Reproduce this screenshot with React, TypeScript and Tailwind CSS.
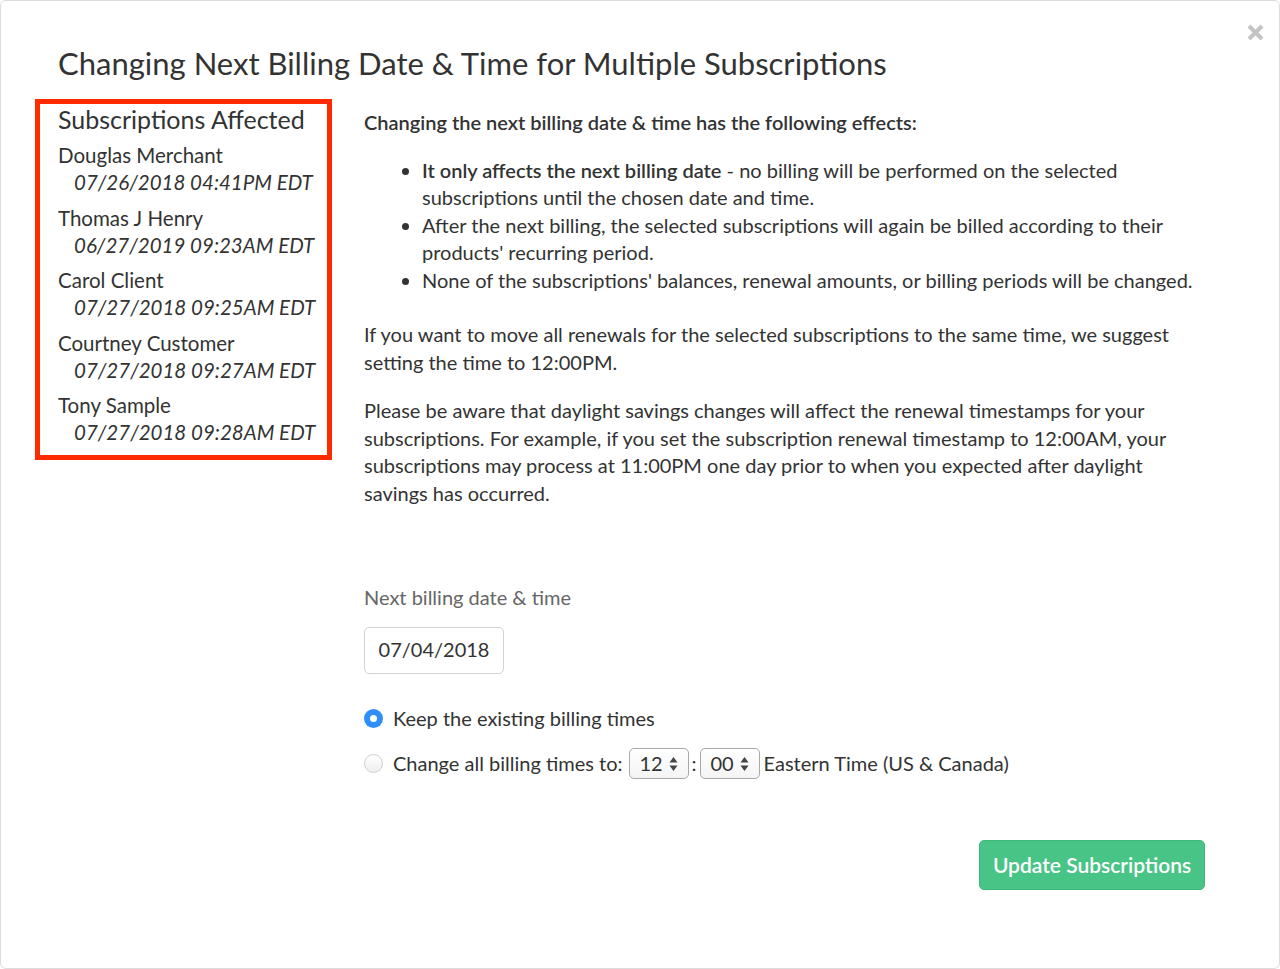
import React from "react";

const subs = [
  { name: "Douglas Merchant", date: "07/26/2018 04:41PM EDT" },
  { name: "Thomas J Henry", date: "06/27/2019 09:23AM EDT" },
  { name: "Carol Client", date: "07/27/2018 09:25AM EDT" },
  { name: "Courtney Customer", date: "07/27/2018 09:27AM EDT" },
  { name: "Tony Sample", date: "07/27/2018 09:28AM EDT" },
];

function Spinner() {
  return (
    <svg width="9" height="16" viewBox="0 0 9 16" className="ml-1.5">
      <path d="M4.5 1 L8.5 6.5 H0.5 Z" fill="#444" />
      <path d="M4.5 15 L8.5 9.5 H0.5 Z" fill="#444" />
    </svg>
  );
}

function TimeSelect({ value }: { value: string }) {
  return (
    <div className="flex h-[31px] w-[60px] items-center justify-center rounded-[5px] border border-[#a9a9a9] bg-gradient-to-b from-white to-[#f4f4f4] text-[20px] text-[#333]">
      <span>{value}</span>
      <Spinner />
    </div>
  );
}

export default function App() {
  return (
    <div
      className="h-[969px] w-[1280px] overflow-hidden bg-white"
      style={{ fontFamily: "Lato, 'Open Sans', sans-serif" }}
    >
      <div className="relative h-full rounded-[6px] border border-[#dcdcdc] pl-[34px] pr-[74px] text-[#333]">
        <button className="absolute right-[14px] top-[22px] text-[#c4c4c4]">
          <svg width="19" height="19" viewBox="0 0 19 19">
            <path d="M3 3 L16 16 M16 3 L3 16" stroke="currentColor" strokeWidth="4.2" strokeLinecap="butt" />
          </svg>
        </button>

        <h1 className="pl-[23px] pt-[44px] text-[31px] leading-[36px] text-[#333]">
          Changing Next Billing Date &amp; Time for Multiple Subscriptions
        </h1>

        <div className="mt-[18px] flex gap-[32px]">
          {/* Affected subscriptions */}
          <div className="h-[361px] w-[297px] shrink-0 border-[5px] border-[#ff2a00] pl-[18px]">
            <h2 className="text-[25px] leading-[31px] text-[#333]">Subscriptions Affected</h2>
            <div className="mt-[7px] flex flex-col gap-[8.5px]">
              {subs.map((s) => (
                <div key={s.name} className="text-[20.5px] leading-[27px]">
                  <div>{s.name}</div>
                  <div className="pl-4 italic">{s.date}</div>
                </div>
              ))}
            </div>
          </div>

          {/* Effects + form */}
          <div className="flex-1 pt-[10px] text-[20px] leading-[27.5px]">
            <p className="font-semibold">Changing the next billing date &amp; time has the following effects:</p>
            <ul className="mt-[20px] list-disc pl-[58px] marker:text-[#333]">
              <li>
                <span className="font-semibold">It only affects the next billing date</span> - no billing will be
                performed on the selected subscriptions until the chosen date and time.
              </li>
              <li>
                After the next billing, the selected subscriptions will again be billed according to their
                products' recurring period.
              </li>
              <li>None of the subscriptions' balances, renewal amounts, or billing periods will be changed.</li>
            </ul>
            <p className="mt-[27px]">
              If you want to move all renewals for the selected subscriptions to the same time, we suggest setting
              the time to 12:00PM.
            </p>
            <p className="mt-[21px]">
              Please be aware that daylight savings changes will affect the renewal timestamps for your
              subscriptions. For example, if you set the subscription renewal timestamp to 12:00AM, your
              subscriptions may process at 11:00PM one day prior to when you expected after daylight savings has
              occurred.
            </p>

            <div className="mt-[77px] text-[#666]">Next billing date &amp; time</div>
            <div className="mt-[15px] flex h-[47px] w-[140px] items-center justify-center rounded-[5px] border border-[#d3d3d3] text-[20px] text-[#333]">
              07/04/2018
            </div>

            <div className="mt-[31px] flex flex-col gap-[16px]">
              <label className="flex items-center gap-[10px]">
                <span className="flex h-[19px] w-[19px] items-center justify-center rounded-full bg-[#2f8ef7]">
                  <span className="h-[7px] w-[7px] rounded-full bg-white" />
                </span>
                <span>Keep the existing billing times</span>
              </label>
              <label className="flex items-center gap-[10px]">
                <span className="h-[19px] w-[19px] rounded-full border border-[#cfcfcf] bg-gradient-to-b from-white to-[#efefef]" />
                <span>Change all billing times to:</span>
                <span className="-ml-[4px] flex items-center gap-[3px]">
                  <TimeSelect value="12" />
                  <span>:</span>
                  <TimeSelect value="00" />
                  <span className="ml-[1px]">Eastern Time (US &amp; Canada)</span>
                </span>
              </label>
            </div>

            <div className="mt-[61px] flex justify-end">
              <button className="h-[50px] w-[226px] rounded-[5px] border border-[#3fb877] bg-[#48c486] text-[21px] font-semibold text-white">
                Update Subscriptions
              </button>
            </div>
          </div>
        </div>
      </div>
    </div>
  );
}
